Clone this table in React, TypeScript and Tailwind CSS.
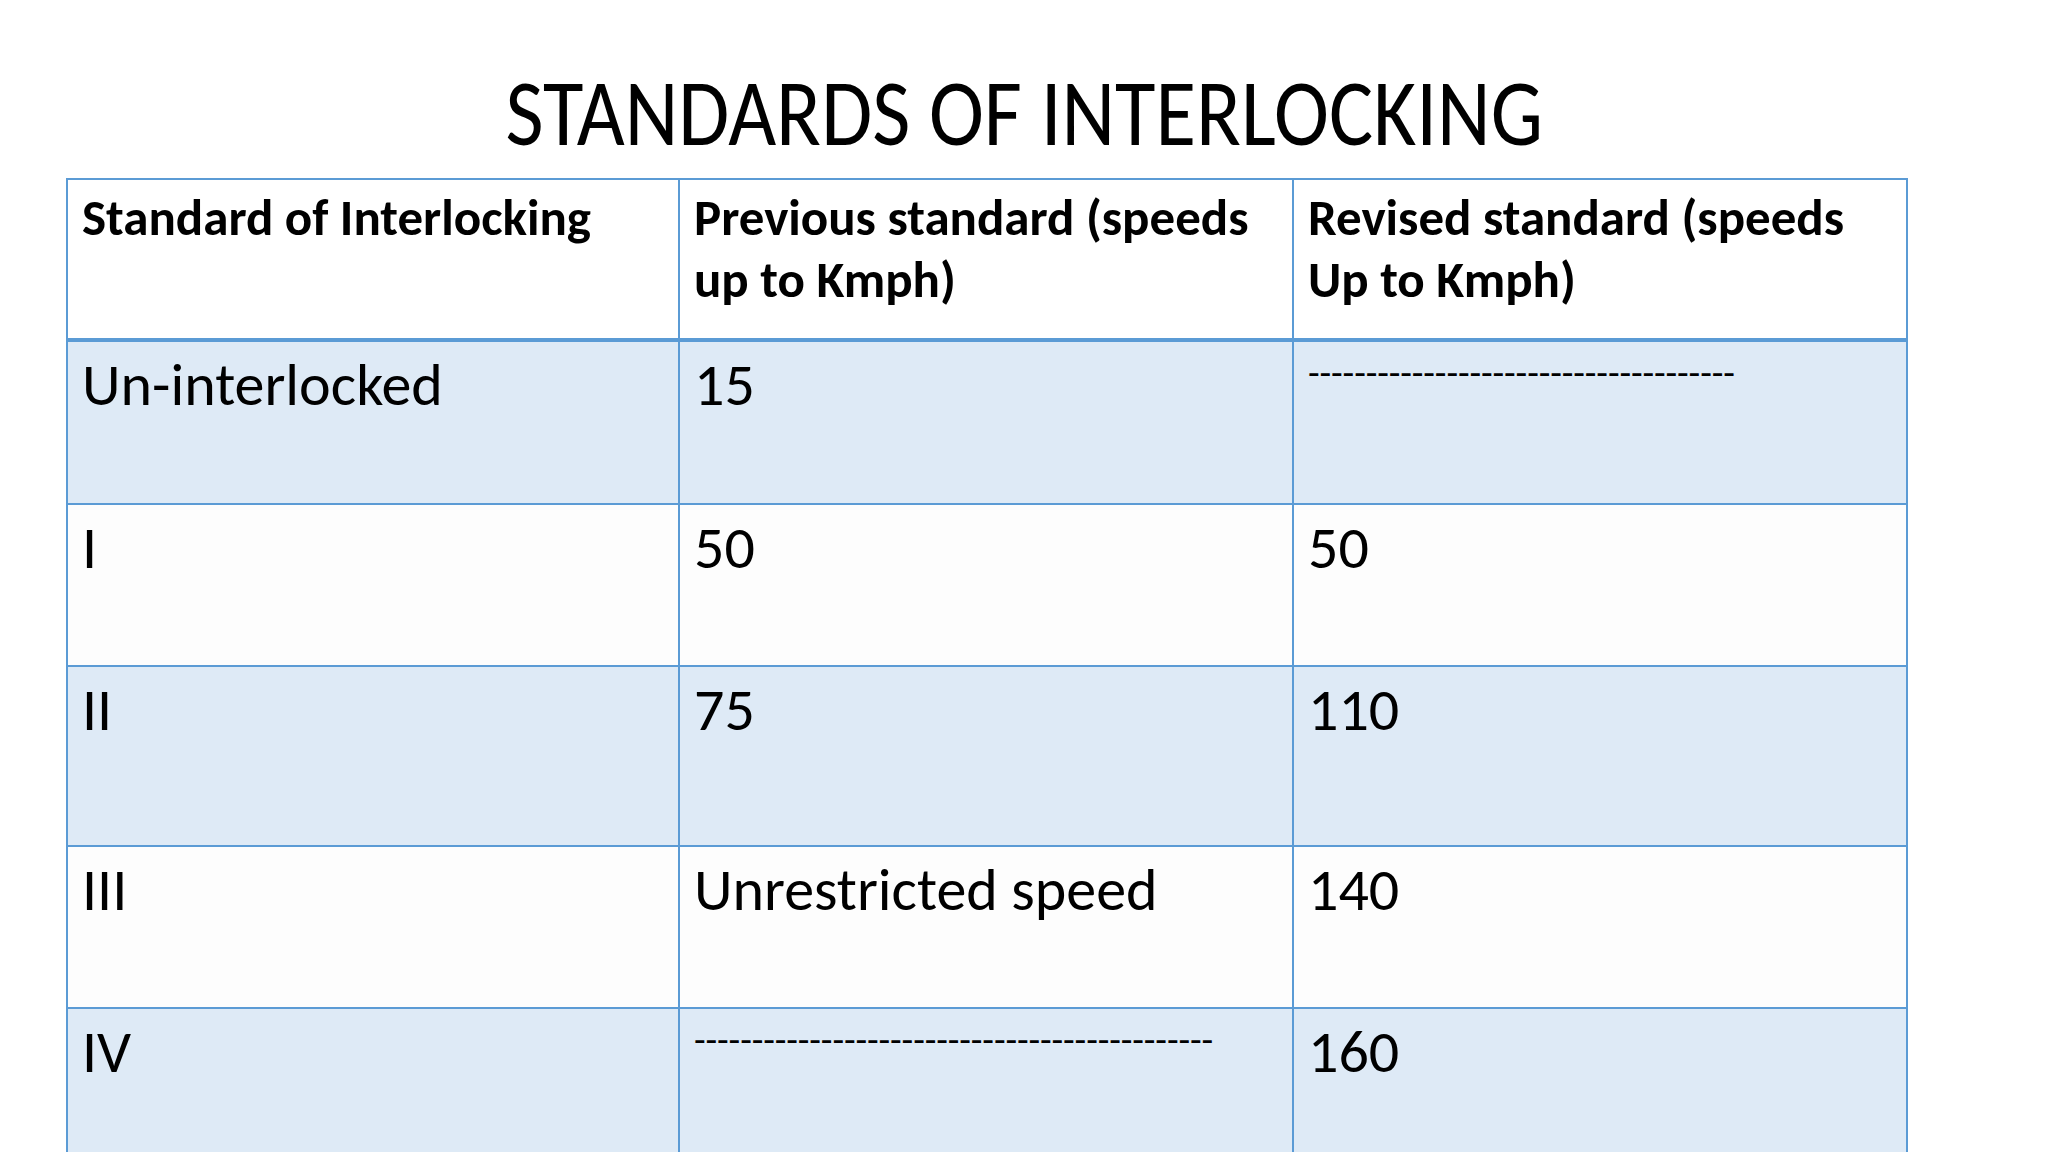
import React from "react";

const DASH_SHORT = "-".repeat(37);
const DASH_LONG = "-".repeat(45);

type Row = {
  cells: string[];
  shade: boolean;
  h: string;
};

const rows: Row[] = [
  { cells: ["Un-interlocked", "15", DASH_SHORT], shade: true, h: "h-[163px]" },
  { cells: ["I", "50", "50"], shade: false, h: "h-[162px]" },
  { cells: ["II", "75", "110"], shade: true, h: "h-[180px]" },
  { cells: ["III", "Unrestricted speed", "140"], shade: false, h: "h-[162px]" },
  { cells: ["IV", DASH_LONG, "160"], shade: true, h: "h-[180px]" },
];

const font = "font-['Carlito','Calibri','Lato',sans-serif]";

function Cell({ text }: { text: string }) {
  const isDash = text.startsWith("---");
  return (
    <div className="border-r-2 border-[#5B9BD5] pl-[14px] pr-[12px] pt-[6px]">
      {isDash ? (
        <div className="pt-[2px] text-[38px] leading-[47px] tracking-[-0.1px] text-black whitespace-nowrap">
          {text}
        </div>
      ) : (
        <div className="text-[60px] leading-[73px] text-black">{text}</div>
      )}
    </div>
  );
}

export default function App() {
  return (
    <div className={`w-[2048px] h-[1152px] overflow-hidden bg-white ${font}`}>
      <h1 className="pt-[66px] text-center text-[94px] leading-[94px] font-normal text-black">
        <span className="inline-block scale-x-[0.882]">STANDARDS OF INTERLOCKING</span>
      </h1>

      <div className="mt-[18px] ml-[66px] w-[1842px] border-t-2 border-l-2 border-[#5B9BD5]">
        {/* header */}
        <div className="grid grid-cols-[612px_614px_614px] h-[162px] border-b-4 border-[#5B9BD5] bg-white">
          {[
            "Standard of Interlocking",
            "Previous standard (speeds up to Kmph)",
            "Revised standard (speeds Up to Kmph)",
          ].map((t) => (
            <div key={t} className="border-r-2 border-[#5B9BD5] pl-[14px] pr-[12px] pt-[7px]">
              <div className="text-[51px] leading-[62px] font-bold text-black">{t}</div>
            </div>
          ))}
        </div>

        {rows.map((r, i) => (
          <div
            key={i}
            className={`grid grid-cols-[612px_614px_614px] border-b-2 border-[#5B9BD5] ${r.h} ${
              r.shade ? "bg-[#DEEAF6]" : "bg-[#FDFDFD]"
            }`}
          >
            {r.cells.map((c, j) => (
              <Cell key={j} text={c} />
            ))}
          </div>
        ))}
      </div>
    </div>
  );
}
